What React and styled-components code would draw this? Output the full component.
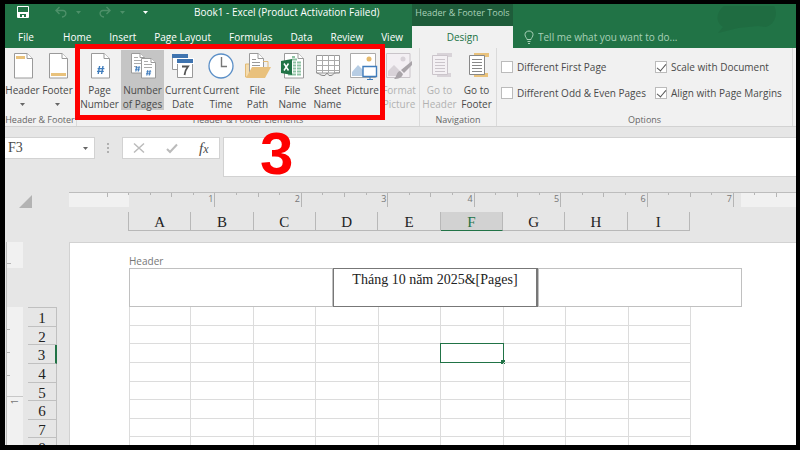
import React from 'react';
import styled, { createGlobalStyle, css } from 'styled-components';

const GlobalStyle = createGlobalStyle`
    * { box-sizing: border-box; }
    body {
        margin: 0;
        background: #000;
        font-family: "Open Sans", "Noto Sans", sans-serif;
        font-size: 10px;
        color: #4a4a4a;
    }
    button, input, textarea {
        font: inherit;
        color: inherit;
        margin: 0;
        padding: 0;
        border: 0;
        border-radius: 0;
        background: none;
        outline: none;
    }
`;

const tabs = ['Home', 'Insert', 'Page Layout', 'Formulas', 'Data', 'Review', 'View'];
const columns = ['A', 'B', 'C', 'D', 'E', 'F', 'G', 'H', 'I'];
const rows = [1, 2, 3, 4, 5, 6, 7, 8];
const inches = [1, 2, 3, 4, 5, 6, 7];

/* ---------- icons ---------- */

const Paper = ({ x = 0, y = 0, w = 18, h = 25, fold = 5, stroke = '#9a9a9a' }) => (
    <g fill="#fff" stroke={stroke}>
        <path d={`M${x + 0.5} ${y + 0.5}H${x + w - fold}L${x + w + 0.5} ${y + fold + 0.5}V${y + h}H${x + 0.5}Z`} />
        <path d={`M${x + w - fold} ${y + 0.5}V${y + fold + 0.5}H${x + w + 0.5}`} />
    </g>
);

const Hash = ({ x, y, s = 1 }) => (
    <path
        transform={`translate(${x} ${y}) scale(${s})`}
        d="M2.6 0L1.2 8M6 0L4.6 8M.6 2.6H7.4M0 5.4H6.8"
        stroke="#3f7cbc" strokeWidth="1.4" fill="none"
    />
);

const HeaderIcon = () => (
    <Icon viewBox="0 0 26 26"><Paper x={4} /><path d="M6 3H15V6H6Z" fill="#e9c27c" /></Icon>
);

const FooterIcon = () => (
    <Icon viewBox="0 0 26 26"><Paper x={4} /><path d="M6 20H21V23H6Z" fill="#e9c27c" /></Icon>
);

const PageNumberIcon = () => (
    <Icon viewBox="0 0 26 26"><Paper x={4} /><Hash x={10} y={13} /></Icon>
);

const PagesIcon = () => (
    <Icon viewBox="0 0 26 26">
        <Paper x={1} w={13} h={20} fold={4} />
        <path d="M4 4.5H8M4 7.5H12M4 10.5H12M4 13.5H7" stroke="#aaa" />
        <Hash x={5} y={13} s={0.7} />
        <Paper x={11} y={5} w={14} h={20} fold={4} />
        <path d="M14 8.5H18M14 11.5H22M14 14.5H22" stroke="#aaa" />
        <Hash x={16} y={17} s={0.7} />
    </Icon>
);

const DateIcon = () => (
    <Icon viewBox="0 0 26 26">
        <path d="M2.5 2.5H17.5V16.5H2.5Z" fill="#fff" stroke="#999" />
        <path d="M2 1H18V5H2Z" fill="#3f74b0" />
        <path d="M7.5 8.5H22.5V24.5H7.5Z" fill="#fff" stroke="#999" />
        <path d="M6 5H24V11H6Z" fill="#fff" />
        <path d="M7 6H23V10H7Z" fill="#3f74b0" />
        <path d="M12 13.5H18C16 16 15 18.5 14.5 22" fill="none" stroke="#555" strokeWidth="1.8" />
    </Icon>
);

const TimeIcon = () => (
    <Icon viewBox="0 0 26 26">
        <circle cx="13" cy="13" r="12" fill="#fff" stroke="#5b8fc7" strokeWidth="1.3" />
        <path d="M13.5 4V13.5H19" fill="none" stroke="#777" strokeWidth="1.4" />
    </Icon>
);

const PathIcon = () => (
    <Icon viewBox="0 0 26 26">
        <path d="M.5 24V11H6V24Z" fill="#f5dcae" stroke="#e2bb75" />
        <Paper x={4} w={14} h={20} />
        <path d="M7 6.5H11M7 9.5H15M7 12.5H15" stroke="#999" />
        <path d="M18 8.5H23V15" fill="none" stroke="#e2bb75" />
        <path d="M1 25L7 14H26L20 25Z" fill="#e9c17d" />
    </Icon>
);

const FileNameIcon = () => (
    <Icon viewBox="0 0 26 26">
        <Paper x={4} w={19} h={25} />
        <path d="M12 4H15M12 6.5H17M13 9.5H21M13 12.5H21M13 15.5H21M13 18.5H21M8 21.5H21" stroke="#8fc3a4" strokeWidth="2" />
        <path d="M16.5 8V23" stroke="#fff" />
        <path d="M1 8L12 6V22L1 20Z" fill="#217346" />
        <path d="M4 10.5L8.5 17.5M8.5 10.5L4 17.5" stroke="#fff" strokeWidth="1.5" />
    </Icon>
);

const SheetIcon = () => (
    <Icon viewBox="0 0 26 26">
        <path d="M1.5 2.5H24.5V20H1.5Z" fill="#fff" stroke="#999" />
        <path d="M1 7.5H25M1 12.5H25M1 17.5H25M7.5 2V20M13.5 2V20M19.5 2V20" stroke="#aaa" />
        <path d="M1 20C4 20 5 23 8 23H10L12 20L14 23H16C18 23 18 20 21 20H25V25H1Z" fill="#f1f1f1" />
        <path d="M1.5 20C4 20 5 22.5 8 22.5H10L12 20L14 22.5H16C18 22.5 18 20 21 20H24.5" fill="none" stroke="#888" />
    </Icon>
);

const PictureIcon = () => (
    <Icon viewBox="0 0 26 26">
        <path d="M.5 .5H25.5V24.5H.5Z" fill="#fff" stroke="#aaa" />
        <path d="M2 23V19L8 12L15 19V23Z" fill="#b7cde4" />
        <circle cx="19" cy="6" r="2.5" fill="#e6ba6c" />
        <path d="M13 13.5H26.5V23.5H13Z" fill="#fff" stroke="#3f7cbc" strokeWidth="1.4" />
        <path d="M20 24V26M17 26.5H23" stroke="#3f7cbc" />
    </Icon>
);

const FormatPictureIcon = () => (
    <Icon viewBox="0 0 26 26">
        <path d="M.5 .5H24V24.5H.5Z" fill="#f3eff3" stroke="#c9c4c9" />
        <path d="M2 23V18L8 12L16 20V23Z" fill="#d8d2d8" />
        <circle cx="17" cy="6" r="2.5" fill="#d8d2d8" />
        <path d="M26 8V12L18 20L15 17Z" fill="#a9a4a9" />
        <path d="M14 18L17 21C16 25 12 26 8 26C11 24 10 19 14 18Z" fill="#a9a4a9" />
    </Icon>
);

const GoToIcon = ({ muted }) => {
    const line = muted ? '#cbc5cb' : '#888';
    const band = muted ? '#d8d3d8' : '#e9c27c';
    return (
        <Icon viewBox="0 0 26 26">
            <path d="M10 0H25V4H10ZM10 20H24V24H10Z" fill={band} />
            <path d="M5.5 2.5H20.5V21.5H5.5Z" fill={muted ? '#f4f1f4' : '#fff'} stroke={line} />
            <path d="M8 6.5H18M8 9.5H18M8 12.5H18M8 15.5H18M8 18.5H18" stroke={line} />
        </Icon>
    );
};

const SaveIcon = () => (
    <SmallIcon viewBox="0 0 12 12">
        <path d="M.5 .5H11.5V11.5H.5Z" fill="none" stroke="#fff" />
        <path d="M1 6H11V11H9V8H3V11H1Z" fill="#fff" />
        <path d="M5 9H7V11H5Z" fill="#fff" />
    </SmallIcon>
);

const UndoIcon = ({ flip }) => (
    <SmallIcon viewBox="0 0 12 12">
        <g transform={flip ? 'matrix(-1 0 0 1 12 0)' : undefined} fill="none" stroke="#4d9069" strokeWidth="1.4">
            <path d="M4.5 1L1 4.5L4.5 8M1 4.5H8C12 4.5 12 10.5 7 11" />
        </g>
    </SmallIcon>
);

const Caret = ({ color = '#666' }) => (
    <CaretSvg viewBox="0 0 5 3"><path d="M0 0H5L2.5 3Z" fill={color} /></CaretSvg>
);

const groups = [
    {
        label: 'Header & Footer',
        items: [
            { text: ['Header'], icon: <HeaderIcon />, width: 35, menu: true },
            { text: ['Footer'], icon: <FooterIcon />, width: 35, menu: true },
        ],
    },
    {
        label: 'Header & Footer Elements',
        items: [
            { text: ['Page', 'Number'], icon: <PageNumberIcon />, width: 43 },
            { text: ['Number', 'of Pages'], icon: <PagesIcon />, width: 43, active: true },
            { text: ['Current', 'Date'], icon: <DateIcon />, width: 38 },
            { text: ['Current', 'Time'], icon: <TimeIcon />, width: 38 },
            { text: ['File', 'Path'], icon: <PathIcon />, width: 35 },
            { text: ['File', 'Name'], icon: <FileNameIcon />, width: 35 },
            { text: ['Sheet', 'Name'], icon: <SheetIcon />, width: 35 },
            { text: ['Picture'], icon: <PictureIcon />, width: 35 },
            { text: ['Format', 'Picture'], icon: <FormatPictureIcon />, width: 38, muted: true },
        ],
    },
    {
        label: 'Navigation',
        items: [
            { text: ['Go to', 'Header'], icon: <GoToIcon muted />, width: 37, muted: true },
            { text: ['Go to', 'Footer'], icon: <GoToIcon />, width: 37 },
        ],
    },
];

const options = [
    { id: 'first', text: 'Different First Page', checked: false },
    { id: 'scale', text: 'Scale with Document', checked: true },
    { id: 'oddEven', text: 'Different Odd & Even Pages', checked: false },
    { id: 'align', text: 'Align with Page Margins', checked: true },
];

function TopBar() {
    return (
        <Top>
            <Cloud viewBox="0 0 80 40">
                <path d="M8 2H58C62 8 60 20 50 23L42 22L22 24L2 29L7 23C-1 18 0 8 8 2Z" fill="#1f6c41" />
            </Cloud>
            <TitleArea>
                <QuickAccess>
                    <QuickButton aria-label="Save"><SaveIcon /></QuickButton>
                    <QuickButton aria-label="Undo"><UndoIcon /><Caret color="#4d9069" /></QuickButton>
                    <QuickButton aria-label="Redo"><UndoIcon flip /><Caret color="#4d9069" /></QuickButton>
                    <QuickButton aria-label="Customize"><Caret color="#fff" /></QuickButton>
                </QuickAccess>
                <Title>Book1 - Excel (Product Activation Failed)</Title>
            </TitleArea>
            <ToolTitle>Header &amp; Footer Tools</ToolTitle>
            <span />
            <Tabs>
                <FileTab>File</FileTab>
                {tabs.map(tab => <Tab key={tab}>{tab}</Tab>)}
            </Tabs>
            <DesignTab>Design</DesignTab>
            <TellMe>
                <Bulb viewBox="0 0 10 14">
                    <path d="M3 9.5C3 8 1 7 1 4.5C1 2.5 2.7 1 5 1S9 2.5 9 4.5C9 7 7 8 7 9.5ZM3.5 11.5H6.5M4 13.5H6" fill="none" stroke="#a8d1b8" />
                </Bulb>
                <TellInput aria-label="Tell me" placeholder="Tell me what you want to do..." />
            </TellMe>
        </Top>
    );
}

function Ribbon() {
    return (
        <RibbonBar>
            {groups.map(group => (
                <Group key={group.label}>
                    <GroupItems>
                        {group.items.map(item => (
                            <BigButton key={item.text.join()} $width={item.width} $active={item.active} $muted={item.muted}>
                                {item.icon}
                                <ButtonText>
                                    {item.text.map(line => <span key={line}>{line}</span>)}
                                    {item.menu && <MenuCaret><Caret /></MenuCaret>}
                                </ButtonText>
                            </BigButton>
                        ))}
                    </GroupItems>
                    <GroupLabel>{group.label}</GroupLabel>
                </Group>
            ))}
            <Group $grow>
                <Options>
                    {options.map(option => (
                        <Option key={option.id} htmlFor={option.id}>
                            <Check id={option.id} type="checkbox" defaultChecked={option.checked} />
                            {option.text}
                        </Option>
                    ))}
                </Options>
                <GroupLabel>Options</GroupLabel>
            </Group>
        </RibbonBar>
    );
}

function FormulaRow() {
    return (
        <FormulaArea>
            <NameBox>
                <NameInput aria-label="Name box" defaultValue="F3" />
                <button aria-label="Open name list"><Caret /></button>
            </NameBox>
            <Dots viewBox="0 0 2 10"><path d="M0 0H2V2H0ZM0 4H2V6H0ZM0 8H2V10H0Z" fill="#b0b0b0" /></Dots>
            <FormulaButtons>
                <button aria-label="Cancel">
                    <SmallIcon viewBox="0 0 12 12"><path d="M1 1.5L11 10.5M11 1.5L1 10.5" stroke="#bbb" strokeWidth="1.5" /></SmallIcon>
                </button>
                <button aria-label="Enter">
                    <SmallIcon viewBox="0 0 12 12"><path d="M1 7L4 10L11 2.5" fill="none" stroke="#bbb" strokeWidth="2" /></SmallIcon>
                </button>
                <FxButton>f<small>x</small></FxButton>
            </FormulaButtons>
            <FormulaInput aria-label="Formula" />
        </FormulaArea>
    );
}

function Sheet() {
    return (
        <SheetGrid>
            <Corner viewBox="0 0 13 13"><path d="M13 0V13H0Z" fill="#b3b3b3" /></Corner>
            <div>
                <Ruler>
                    <RulerMargin>
                        <Tick $size={0} /><Tick $size={4} /><Tick $size={2} />
                    </RulerMargin>
                    <RulerInches>
                        {inches.map(n => (
                            <Inch key={n}>
                                <Tick $size={2} /><Tick $size={4} /><Tick $size={2} />
                                <InchEnd>{n}</InchEnd>
                            </Inch>
                        ))}
                    </RulerInches>
                    <RulerMargin $end>
                        <Tick $size={2} /><Tick $size={4} />
                    </RulerMargin>
                </Ruler>
                <ColumnHeads>
                    {columns.map(name => <ColumnHead key={name} $active={name === 'F'}>{name}</ColumnHead>)}
                </ColumnHeads>
            </div>
            <Side>
                <SideRuler>
                    <SideMargin />
                    <SideGap />
                    <SideInch />
                    <SideRest>1</SideRest>
                </SideRuler>
                <RowHeads>
                    {rows.map(n => <RowHead key={n} $active={n === 3}>{n}</RowHead>)}
                </RowHeads>
            </Side>
            <Paperboard>
                <HeaderLabel htmlFor="center">Header</HeaderLabel>
                <HeaderBoxes>
                    <HeaderBox aria-label="Left section" />
                    <HeaderBox id="center" $focused defaultValue="Tháng 10 năm 2025&[Pages]" />
                    <HeaderBox aria-label="Right section" />
                </HeaderBoxes>
                <Cells>
                    <tbody>
                        {rows.map(n => (
                            <tr key={n}>
                                {columns.map(name => <Cell key={name} $selected={name === 'F' && n === 3} />)}
                            </tr>
                        ))}
                    </tbody>
                </Cells>
            </Paperboard>
        </SheetGrid>
    );
}

function App() {
    return (
        <Frame>
            <GlobalStyle />
            <TopBar />
            <Ribbon />
            <FormulaRow />
            <Sheet />
            <RedBox />
            <Step>3</Step>
        </Frame>
    );
}

const Frame = styled.div`
    position: relative;
    display: flex;
    flex-direction: column;
    height: 100vh;
    overflow: hidden;
    border: solid #000;
    border-width: 4px 4px 5px 5px;
    background: #e6e6e6;
`;

const Icon = styled.svg`
    display: block;
    width: 26px;
    height: 26px;
    overflow: visible;
`;

const SmallIcon = styled.svg`
    display: block;
    width: 12px;
    height: 12px;
`;

const CaretSvg = styled.svg`
    display: block;
    width: 5px;
    height: 3px;
`;

/* top bar */

const Top = styled.header`
    position: relative;
    display: grid;
    grid-template-columns: 407px 101px 1fr;
    grid-template-rows: 22px 22px;
    background: #217346;
    color: #fff;
`;

const Cloud = styled.svg`
    position: absolute;
    right: 0;
    top: 0;
    width: 80px;
    height: 40px;
`;

const TitleArea = styled.div`
    display: flex;
    align-items: center;
    gap: 46px;
    padding: 0 0 6px 12px;
`;

const QuickAccess = styled.div`
    display: flex;
    align-items: center;
    gap: 18px;
`;

const QuickButton = styled.button`
    display: flex;
    align-items: center;
    gap: 9px;

    &:first-child {
        margin-right: 8px;
    }
`;

const Title = styled.div`
    white-space: nowrap;
`;

const ToolTitle = styled.div`
    background: #1e5c3a;
    color: #a8d1b8;
    font-size: 9px;
    line-height: 18px;
    text-align: center;
    white-space: nowrap;
`;

const Tabs = styled.nav`
    display: flex;
`;

const Tab = styled.button`
    padding: 0 9px;
    line-height: 22px;
    white-space: nowrap;
`;

const FileTab = styled(Tab)`
    width: 44px;
    margin-right: 7px;
`;

const DesignTab = styled(Tab)`
    background: #f1f1f1;
    color: #217346;
`;

const TellMe = styled.div`
    display: flex;
    align-items: center;
    gap: 4px;
    padding-left: 11px;
`;

const Bulb = styled.svg`
    width: 10px;
    height: 14px;
`;

const TellInput = styled.input`
    flex: 1;

    &::placeholder {
        color: #a8d1b8;
        opacity: 1;
    }
`;

/* ribbon */

const RibbonBar = styled.div`
    display: flex;
    height: 79px;
    padding-right: 3px;
    background: #f1f1f1;
    border-bottom: 1px solid #d2d2d2;
`;

const Group = styled.section`
    display: flex;
    flex-direction: column;
    justify-content: space-between;
    flex: ${p => (p.$grow ? '1' : 'none')};
    padding: 2px 1px 0;
    border-right: 1px solid #dadada;

    &:first-child {
        padding-left: 0;
    }
`;

const GroupItems = styled.div`
    display: flex;
`;

const BigButton = styled.button`
    display: flex;
    flex-direction: column;
    align-items: center;
    width: ${p => p.$width}px;
    height: 60px;
    padding-top: 3px;
    ${p => p.$active && css`background: #c5c5c5;`}
    ${p => p.$muted && css`color: #b1b1b1;`}
`;

const ButtonText = styled.span`
    display: flex;
    flex-direction: column;
    align-items: center;
    margin-top: 4px;
    line-height: 14px;
    white-space: nowrap;
`;

const MenuCaret = styled.span`
    margin-top: 6px;
`;

const GroupLabel = styled.div`
    font-size: 9px;
    line-height: 12px;
    color: #666;
    text-align: center;
    white-space: nowrap;
`;

const Options = styled.div`
    display: grid;
    grid-template-columns: 154px 1fr;
    gap: 14px 0;
    padding: 11px 0 0 3px;
`;

const Option = styled.label`
    display: flex;
    align-items: center;
    gap: 4px;
    height: 12px;
    white-space: nowrap;
`;

const Check = styled.input`
    appearance: none;
    width: 12px;
    height: 12px;
    border: 1px solid #bbb;
    background: #fff;

    &:checked::after {
        content: '';
        display: block;
        width: 4px;
        height: 8px;
        margin-left: 3px;
        border: solid #555;
        border-width: 0 1px 1px 0;
        transform: rotate(40deg);
    }
`;

/* formula bar */

const FormulaArea = styled.div`
    display: flex;
    align-items: flex-start;
    padding-top: 10px;
    margin-bottom: 15px;
`;

const NameBox = styled.div`
    display: flex;
    align-items: center;
    width: 90px;
    height: 22px;
    padding: 0 6px 0 3px;
    background: #fff;
    border: 1px solid #d2d2d2;
    border-left: 0;
`;

const NameInput = styled.input`
    flex: 1;
    min-width: 0;
    font-family: "Liberation Serif", serif;
    font-size: 14px;
`;

const Dots = styled.svg`
    width: 2px;
    height: 10px;
    margin: 6px 13px 0 12px;
`;

const FormulaButtons = styled.div`
    display: flex;
    align-items: center;
    justify-content: space-around;
    width: 98px;
    height: 22px;
    margin-right: 3px;
    background: #fff;
    border: 1px solid #d2d2d2;
`;

const FxButton = styled.button`
    font-family: "Liberation Serif", serif;
    font-size: 15px;
    font-style: italic;
    line-height: 18px;

    small {
        font-size: 12px;
    }
`;

const FormulaInput = styled.textarea`
    flex: 1;
    height: 40px;
    resize: none;
    background: #fff;
    border: 1px solid #d2d2d2;
    border-right: 0;
`;

/* sheet */

const SheetGrid = styled.main`
    flex: 1;
    display: grid;
    grid-template-columns: 64px 1fr;
    grid-template-rows: 50px 1fr;
    min-height: 0;
`;

const Corner = styled.svg`
    width: 13px;
    height: 13px;
    margin: 3px 0 0 14px;
`;

const Ruler = styled.div`
    display: flex;
    height: 15px;
    border-top: 1px solid #bdbdbd;
    font-size: 9px;
    color: #777;
`;

const RulerMargin = styled.div`
    display: grid;
    grid-template-columns: ${p => (p.$end ? '14px 22px' : '18px 21px 21px')};
    background: #f1f1f1;
    ${p => p.$end && css`
        flex: 1;
        margin-left: 7px;
    `}
`;

const RulerInches = styled.div`
    display: grid;
    grid-template-columns: repeat(7, 1fr);
    width: 605px;
`;

const Inch = styled.div`
    display: grid;
    grid-template-columns: repeat(4, 1fr);
`;

const Tick = styled.span`
    height: ${p => p.$size}px;
    border-right: 1px solid #b5b5b5;
`;

const InchEnd = styled.span`
    padding-right: 1px;
    border-right: 1px solid #b5b5b5;
    line-height: 11px;
    text-align: right;
`;

const heads = css`
    font-family: "Liberation Serif", serif;
    font-size: 15px;
    color: #222;
    text-align: center;
`;

const ColumnHeads = styled.div`
    display: grid;
    grid-template-columns: repeat(9, 1fr);
    width: 562px;
    margin: 5px 0 0 59px;
    border-left: 1px solid #b8b8b8;
`;

const ColumnHead = styled.div`
    ${heads}
    height: 19px;
    line-height: 20px;
    border: solid #b8b8b8;
    border-width: 0 1px 1px 0;
    ${p => p.$active && css`
        background: #d2d2d2;
        border-bottom-color: #217346;
        color: #217346;
    `}
`;

const Side = styled.aside`
    display: flex;
    gap: 5px;
    padding-left: 1px;
    min-height: 0;
    overflow: hidden;
`;

const SideRuler = styled.div`
    display: flex;
    flex-direction: column;
    width: 17px;
    border-left: 1px solid #bdbdbd;
`;

const SideMargin = styled.div`
    height: 26px;
    background: linear-gradient(#b5b5b5, #b5b5b5) 0 21px / 4px 1px no-repeat #f1f1f1;
`;

const SideGap = styled.div`
    height: 39px;
`;

const SideInch = styled.div`
    height: 90px;
    background: repeating-linear-gradient(transparent 0 22px, #b5b5b5 22px 23px) 0 0 / 3px 100% no-repeat #f1f1f1;
    border-bottom: 1px solid #c8c8c8;
`;

const SideRest = styled.div`
    flex: 1;
    padding: 2px 0 0 3px;
    background: #f1f1f1;
    color: #777;
    font-size: 9px;
    line-height: 9px;
    writing-mode: sideways-lr;
    text-align: right;
`;

const RowHeads = styled.div`
    display: grid;
    grid-template-rows: repeat(8, 1fr);
    width: 29px;
    height: 150px;
    margin-top: 65px;
    border-top: 1px solid #c0c0c0;
`;

const RowHead = styled.div`
    ${heads}
    line-height: 20px;
    min-height: 0;
    border: solid #c0c0c0;
    border-width: 0 1px 1px 0;
    ${p => p.$active && css`border-right: 2px solid #217346;`}
`;

const Paperboard = styled.section`
    padding: 12px 54px 0 59px;
    min-height: 0;
    overflow: hidden;
    background: #fff;
    border: solid #d2d2d2;
    border-width: 1px 0 0 1px;
`;

const HeaderLabel = styled.label`
    display: block;
    line-height: 13px;
    color: #777;
`;

const HeaderBoxes = styled.div`
    display: grid;
    grid-template-columns: repeat(3, 1fr);
`;

const HeaderBox = styled.textarea`
    height: 39px;
    padding-top: 2px;
    resize: none;
    overflow: hidden;
    border: 1px solid #c0c0c0;
    font-family: "Liberation Serif", serif;
    font-size: 14px;
    line-height: 17px;
    color: #222;
    text-align: center;
    ${p => p.$focused && css`
        border-color: #777;
        border-right-width: 2px;
    `}
`;

const Cells = styled.table`
    width: 562px;
    height: 149px;
    table-layout: fixed;
    border-spacing: 0;
`;

const Cell = styled.td`
    position: relative;
    padding: 0;
    border: solid #dcdcdc;
    border-width: 0 1px 1px 0;

    &:first-child {
        border-left-width: 1px;
    }

    ${p => p.$selected && css`
        &::before {
            content: '';
            position: absolute;
            inset: -1px;
            border: 1px solid #217346;
        }

        &::after {
            content: '';
            position: absolute;
            right: -2px;
            bottom: -2px;
            width: 4px;
            height: 4px;
            background: #217346;
        }
    `}
`;

/* step marker drawn over the ribbon */

const RedBox = styled.div`
    position: absolute;
    left: 70px;
    top: 40px;
    width: 310px;
    height: 76px;
    border: 5px solid #fe0000;
`;

const Step = styled.div`
    position: absolute;
    left: 255px;
    top: 118px;
    color: #fe0000;
    font-family: "Liberation Sans", sans-serif;
    font-size: 60px;
    font-weight: bold;
    line-height: 64px;
`;

export default App;
